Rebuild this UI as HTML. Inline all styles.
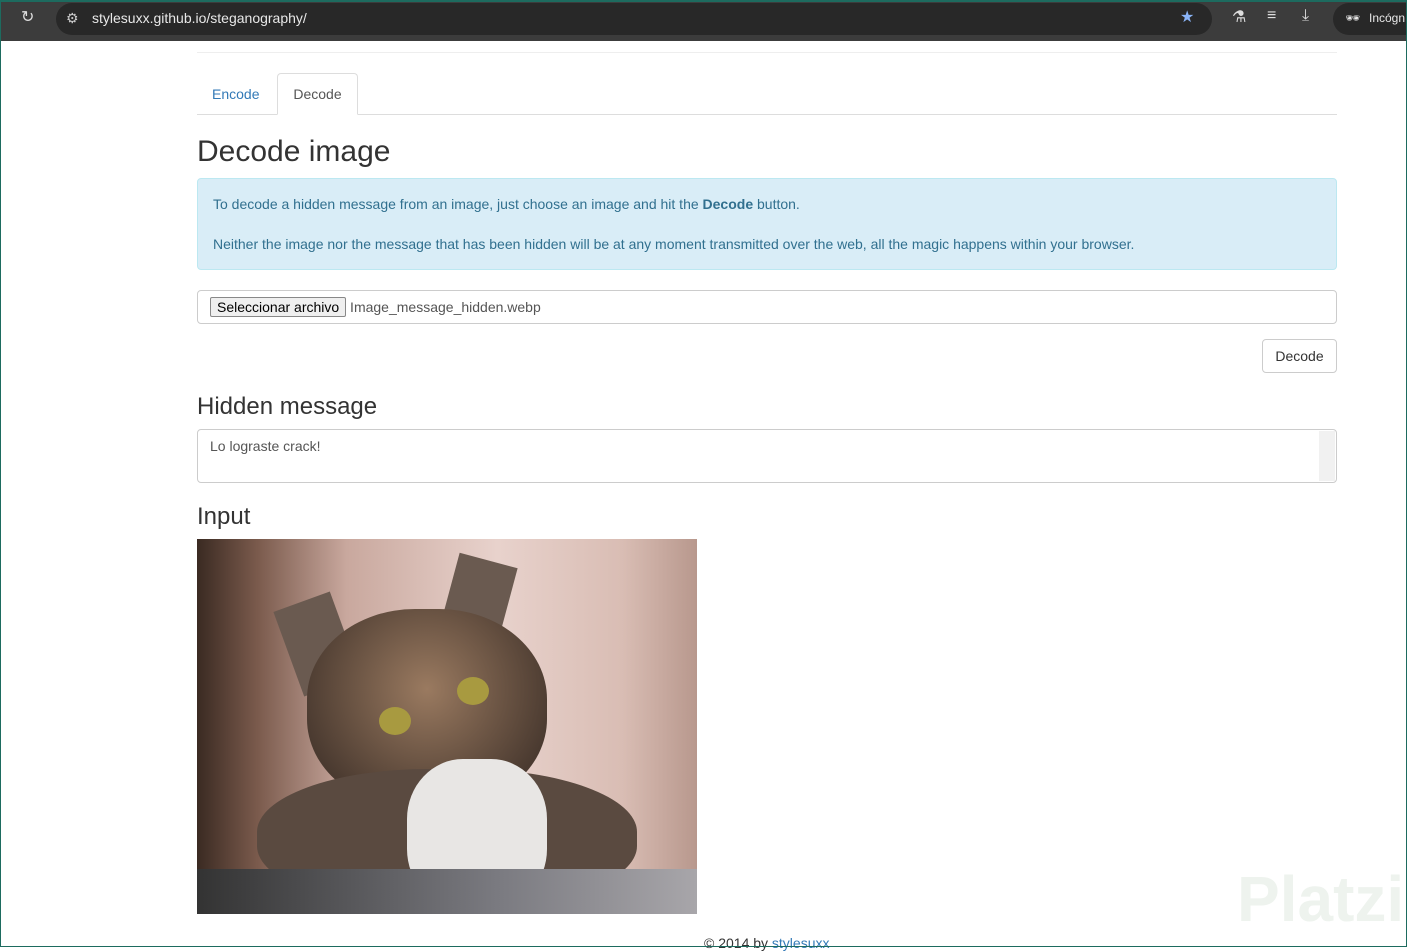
<!DOCTYPE html>
<html><head><meta charset="utf-8"><style>
*{box-sizing:border-box}
body{margin:0;width:1407px;height:947px;overflow:hidden;font-family:"Liberation Sans",sans-serif;background:#fff;position:relative;}
.frame{position:absolute;left:0;top:0;width:1407px;height:947px;border:1px solid #1d6b5f;pointer-events:none}
.bar{position:absolute;left:0;top:0;width:1407px;height:41px;background:#3c3c3c;border-top:2px solid #1d6b5f}
.url{position:absolute;left:56px;top:1px;width:1156px;height:32px;border-radius:16px;background:#282828;color:#e8e8e8;font-size:14px;line-height:30px;padding-left:36px}
.inc{position:absolute;left:1333px;top:1px;width:90px;height:32px;border-radius:16px;background:#282828;color:#e8e8e8;font-size:12px;line-height:30px;padding-left:36px}
.ic{position:absolute;color:#ddd;font-size:16px;top:5px}
.c{position:absolute;left:197px;width:1140px}
h1,h2{font-weight:400;color:#333;margin:0}
</style></head><body>
<div class="bar">
<span class="ic" style="left:21px">↻</span>
<div class="url"><span style="position:absolute;left:10px;color:#ccc">⚙</span>stylesuxx.github.io/steganography/</div>
<span class="ic" style="left:1180px;color:#8ab4f8">★</span>
<span class="ic" style="left:1232px">⚗</span>
<span class="ic" style="left:1267px">≡</span>
<span class="ic" style="left:1302px">⤓</span>
<div class="inc"><span style="position:absolute;left:12px">🕶</span>Incógn</div>
</div>
<div class="c" style="top:52px;height:1px;background:#eee"></div>
<div class="c" style="top:114px;height:1px;background:#ddd"></div>
<div style="position:absolute;left:212px;top:86px;color:#337ab7;font-size:14px">Encode</div>
<div style="position:absolute;left:277px;top:73px;width:81px;height:42px;border:1px solid #ddd;border-bottom:1px solid #fff;background:#fff;border-radius:4px 4px 0 0;color:#555;font-size:14px;text-align:center;line-height:40px">Decode</div>
<h1 class="c" style="top:135px;font-size:30px">Decode image</h1>
<div class="c" style="top:178px;height:92px;background:#d9edf7;border:1px solid #bce8f1;border-radius:4px;color:#31708f;font-size:14px;padding:15px 15px;line-height:20px">To decode a hidden message from an image, just choose an image and hit the <b>Decode</b> button.<br><br>Neither the image nor the message that has been hidden will be at any moment transmitted over the web, all the magic happens within your browser.</div>
<div class="c" style="top:290px;height:34px;border:1px solid #ccc;border-radius:4px;font-size:14px;color:#555;padding:6px 12px"><span style="display:inline-block;border:1px solid #888;background:#efefef;color:#000;padding:1px 6px;border-radius:2px">Seleccionar archivo</span> Image_message_hidden.webp</div>
<div style="position:absolute;left:1262px;top:339px;width:75px;height:34px;border:1px solid #ccc;border-radius:4px;font-size:14px;color:#333;text-align:center;line-height:32px">Decode</div>
<h2 class="c" style="top:393px;font-size:24px">Hidden message</h2>
<div class="c" style="top:429px;height:54px;border:1px solid #ccc;border-radius:4px;font-size:14px;color:#555;padding:8px 12px;overflow:hidden">Lo lograste crack!<div style="position:absolute;right:1px;top:1px;width:16px;height:50px;background:#f1f1f1"></div></div>
<h2 class="c" style="top:503px;font-size:24px">Input</h2>
<div style="position:absolute;left:197px;top:539px;width:500px;height:375px;background:linear-gradient(90deg,#3a2a22 0%,#7a5a4c 12%,#c9a89e 30%,#e8d2cc 60%,#d9bdb4 85%,#b8988d 100%);overflow:hidden">
<div style="position:absolute;left:90px;top:60px;width:60px;height:90px;background:#6a5a50;transform:rotate(-20deg)"></div>
<div style="position:absolute;left:250px;top:20px;width:60px;height:90px;background:#6a5a50;transform:rotate(15deg)"></div>
<div style="position:absolute;left:110px;top:70px;width:240px;height:200px;border-radius:45%;background:radial-gradient(circle at 50% 40%,#9a7a60,#4a3a30 75%)"></div>
<div style="position:absolute;left:60px;top:230px;width:380px;height:140px;border-radius:45%;background:#5a4a40"></div>
<div style="position:absolute;left:210px;top:220px;width:140px;height:150px;border-radius:40%;background:#e8e6e4"></div>
<div style="position:absolute;left:0;top:330px;width:500px;height:50px;background:linear-gradient(90deg,#333,#7a7a80 60%,#a8a6aa)"></div>
<div style="position:absolute;left:182px;top:168px;width:32px;height:28px;border-radius:50%;background:#a89a40"></div>
<div style="position:absolute;left:260px;top:138px;width:32px;height:28px;border-radius:50%;background:#a89a40"></div>
</div>
<div style="position:absolute;left:704px;top:935px;font-size:14px;color:#333">© 2014 by <span style="color:#337ab7">stylesuxx</span></div>
<div style="position:absolute;left:1237px;top:862px;font-size:64px;color:#eef3ee;font-weight:700">Platzi</div>
<div class="frame"></div>
</body></html>
